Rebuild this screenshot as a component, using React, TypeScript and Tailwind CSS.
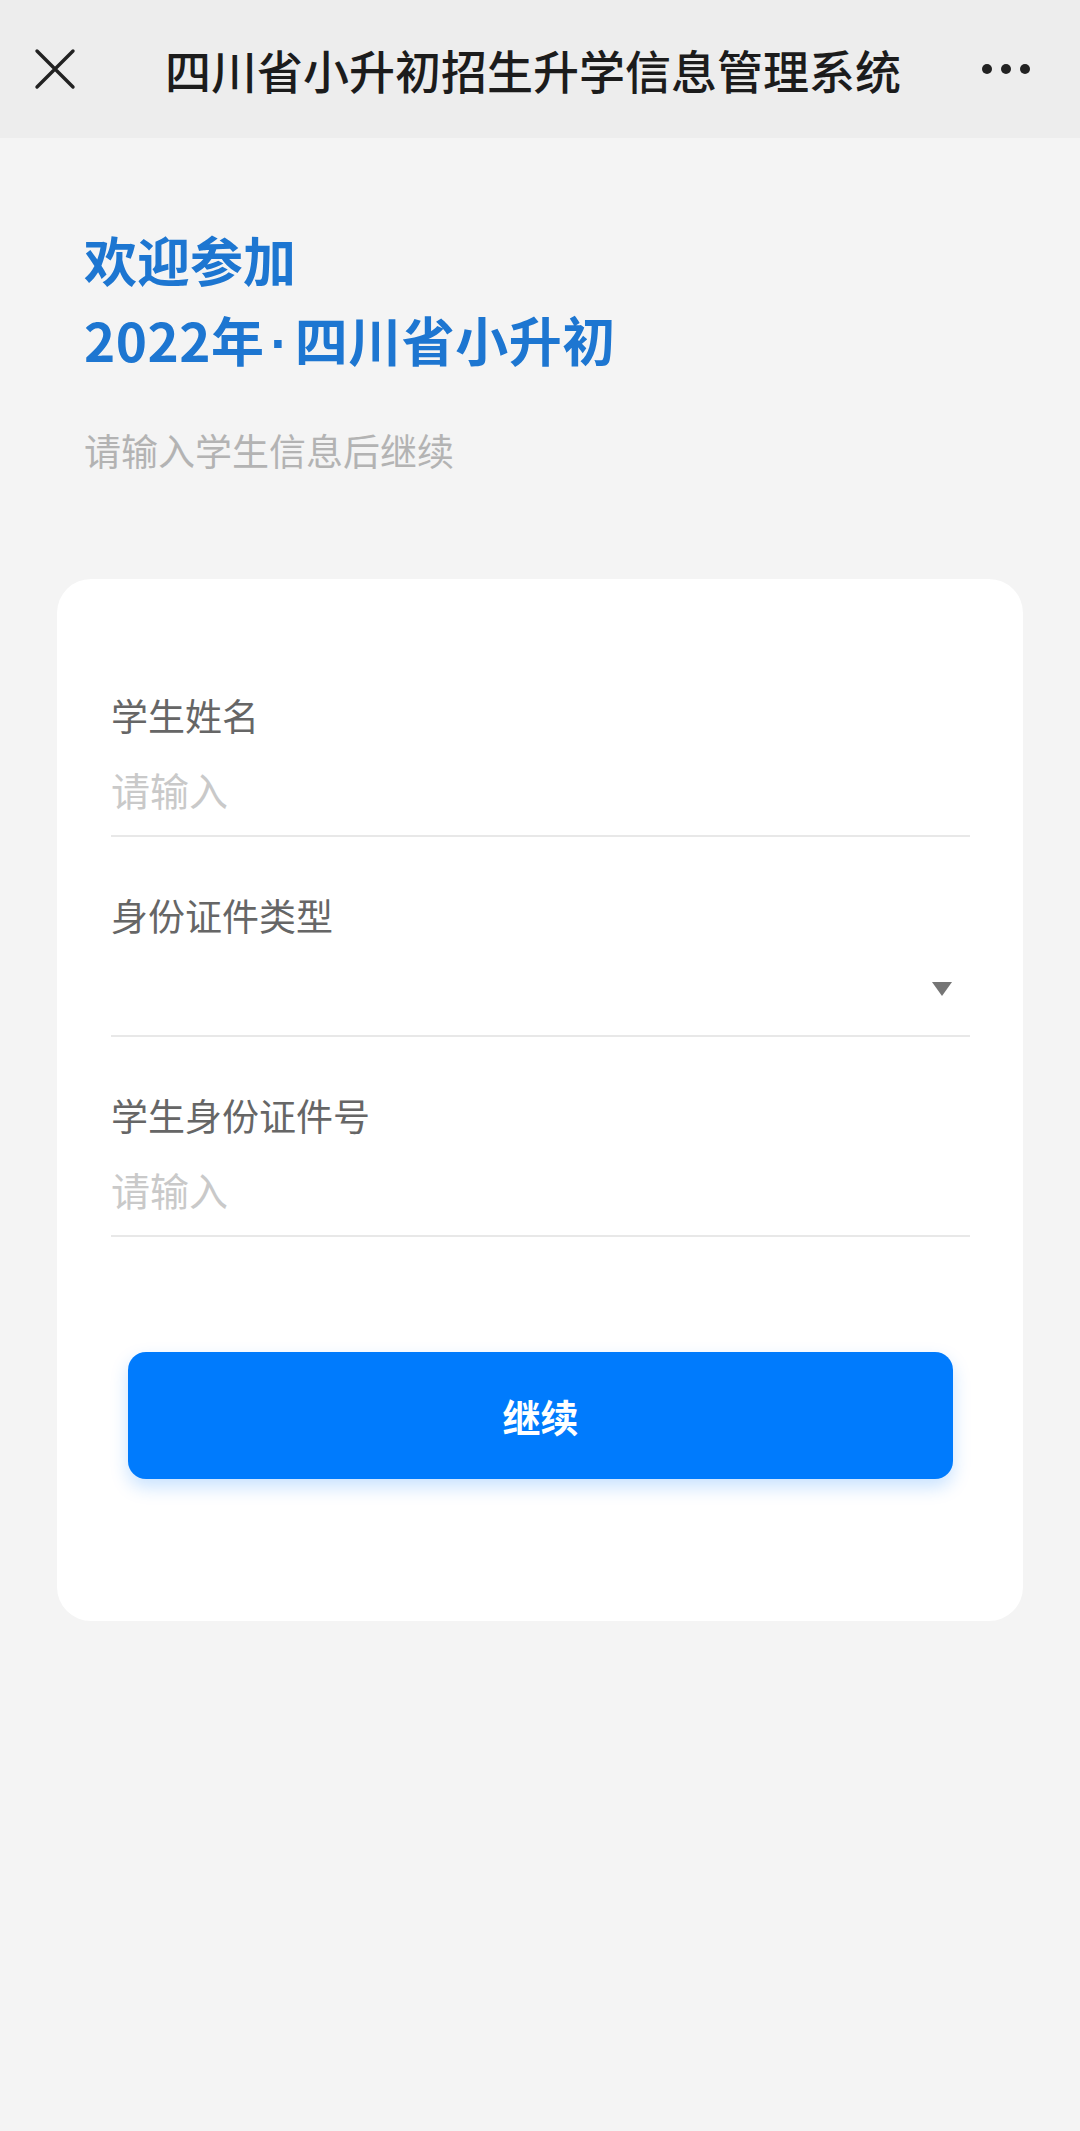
import React from 'react';

const font = { fontFamily: '"Noto Sans CJK SC", "Noto Sans", sans-serif' };

const Field: React.FC<{ label: string; placeholder?: string; select?: boolean }> = ({ label, placeholder, select }) => (
  <div className="h-[200px] border-b-2 border-[#e8e8e8] pt-[54px] flex flex-col">
    <div className="h-[48px] leading-[48px] text-[37px] text-[#666666]">{label}</div>
    <div className="mt-[24px] h-[52px] flex items-center justify-between">
      {placeholder ? (
        <span className="text-[39px] leading-[52px] text-[#c9c9c9]">{placeholder}</span>
      ) : (
        <span />
      )}
      {select && (
        <svg width="22" height="16" viewBox="0 0 22 16" className="mr-[17px]">
          <polygon points="1,1 21,1 11,15" fill="#757575" />
        </svg>
      )}
    </div>
  </div>
);

export default function App() {
  return (
    <div className="min-h-[2131px] bg-[#f4f4f4]" style={font}>
      <header className="h-[138px] bg-[#ededed] flex items-center justify-between px-[34px]">
        <svg width="42" height="42" viewBox="0 0 42 42" className="shrink-0">
          <path d="M3 3 L39 39 M39 3 L3 39" stroke="#222222" strokeWidth="3.4" strokeLinecap="round" />
        </svg>
        <h1 className="text-[46px] font-medium text-[#1c1c1c] ml-[8px]">四川省小升初招生升学信息管理系统</h1>
        <div className="flex items-center gap-[9px] mr-[16px]">
          <span className="w-[10px] h-[10px] rounded-full bg-[#222222]" />
          <span className="w-[10px] h-[10px] rounded-full bg-[#222222]" />
          <span className="w-[10px] h-[10px] rounded-full bg-[#222222]" />
        </div>
      </header>

      <section className="px-[84px] pt-[81px]">
        <h2 className="text-[53px] font-bold leading-[80px] text-[#1d76d1]">
          <div className="h-[80px]">欢迎参加</div>
          <div className="h-[80px] tracking-[0.5px]">
            2022年<span className="mx-[6px] leading-none" style={{ fontFamily: '"Liberation Sans", sans-serif' }}>·</span>四川省小升初
          </div>
        </h2>
        <p className="mt-[47px] text-[37px] leading-[48px] text-[#b3b3b3]">请输入学生信息后继续</p>
      </section>

      <main className="mx-[57px] mt-[105px] bg-white rounded-[34px] pt-[58px] pb-[142px] pl-[54px] pr-[53px]">
        <Field label="学生姓名" placeholder="请输入" />
        <Field label="身份证件类型" select />
        <Field label="学生身份证件号" placeholder="请输入" />
        <button className="mt-[115px] mx-[17px] w-[calc(100%-34px)] h-[127px] rounded-[18px] bg-[#007bfd] text-white text-[38px] font-bold shadow-[0_8px_18px_rgba(0,123,253,0.22)]">
          继续
        </button>
      </main>
    </div>
  );
}
